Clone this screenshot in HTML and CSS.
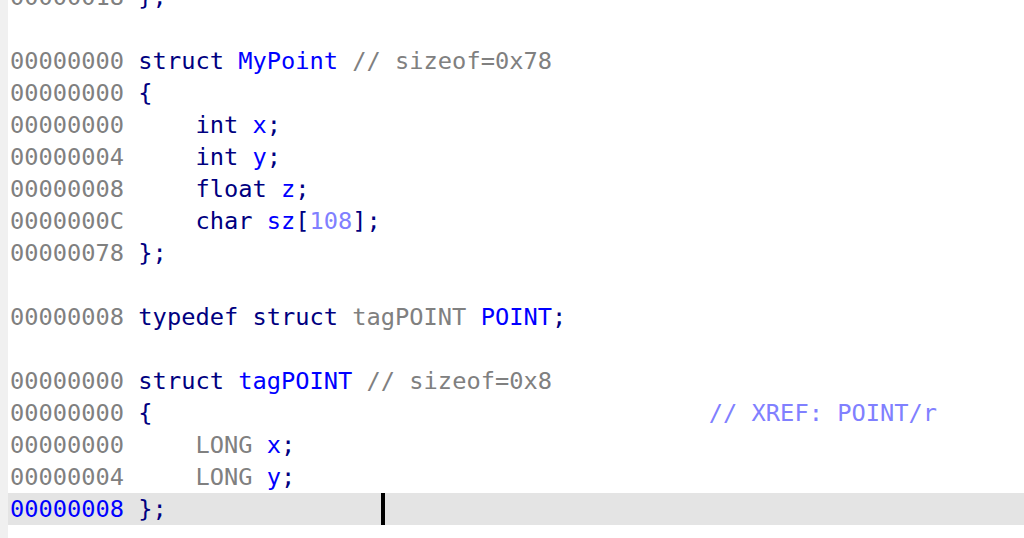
FILE: index.html
```html
<!DOCTYPE html>
<html>
<head>
<meta charset="utf-8">
<link rel="stylesheet" href="styles.css">
</head>
<body>
<div class="view">
  <div class="gutter"></div>
  <div class="code">
<div class="line"><span class="off">00000018</span> <span class="kw">};</span></div>
<div class="line"> </div>
<div class="line"><span class="off">00000000</span> <span class="kw">struct</span> <span class="nm">MyPoint</span> <span class="cm">// sizeof=0x78</span></div>
<div class="line"><span class="off">00000000</span> <span class="kw">{</span></div>
<div class="line"><span class="off">00000000</span>     <span class="kw">int</span> <span class="nm">x</span><span class="kw">;</span></div>
<div class="line"><span class="off">00000004</span>     <span class="kw">int</span> <span class="nm">y</span><span class="kw">;</span></div>
<div class="line"><span class="off">00000008</span>     <span class="kw">float</span> <span class="nm">z</span><span class="kw">;</span></div>
<div class="line"><span class="off">0000000C</span>     <span class="kw">char</span> <span class="nm">sz</span><span class="kw">[</span><span class="num">108</span><span class="kw">];</span></div>
<div class="line"><span class="off">00000078</span> <span class="kw">};</span></div>
<div class="line"> </div>
<div class="line"><span class="off">00000008</span> <span class="kw">typedef struct</span> <span class="ty">tagPOINT</span> <span class="nm">POINT</span><span class="kw">;</span></div>
<div class="line"> </div>
<div class="line"><span class="off">00000000</span> <span class="kw">struct</span> <span class="nm">tagPOINT</span> <span class="cm">// sizeof=0x8</span></div>
<div class="line"><span class="off">00000000</span> <span class="kw">{</span>                                       <span class="xref">// XREF: POINT/r</span></div>
<div class="line"><span class="off">00000000</span>     <span class="ty">LONG</span> <span class="nm">x</span><span class="kw">;</span></div>
<div class="line"><span class="off">00000004</span>     <span class="ty">LONG</span> <span class="nm">y</span><span class="kw">;</span></div>
<div class="line current"><span class="off cur-off">00000008</span> <span class="kw">};</span>               <span class="caret"></span></div>
  </div>
</div>
</body>
</html>
```
FILE: styles.css
```css
html, body {
  margin: 0;
  padding: 0;
  background: #ffffff;
  width: 1024px;
  height: 538px;
  overflow: hidden;
}

.view {
  display: flex;
  height: 538px;
  overflow: hidden;
}

.gutter {
  width: 8px;
  flex: 0 0 8px;
  background: #f0f0f0;
}

.code {
  flex: 1;
  margin-top: -19px;
  font-family: "DejaVu Sans Mono", "Liberation Mono", monospace;
  font-size: 23.7px;
  color: #000080;
}

.line {
  height: 32px;
  line-height: 32px;
  padding-left: 2px;
  white-space: pre;
}

.line.current {
  background: #e4e4e4;
}

.off { color: #808080; }
.cur-off { color: #0000ff; }
.kw { color: #000080; }
.nm { color: #0000ff; }
.cm { color: #808080; }
.ty { color: #808080; }
.num { color: #8080ff; }
.xref { color: #8080ff; }

.caret {
  display: inline-block;
  width: 4px;
  height: 32px;
  background: #000000;
  vertical-align: top;
}
```
